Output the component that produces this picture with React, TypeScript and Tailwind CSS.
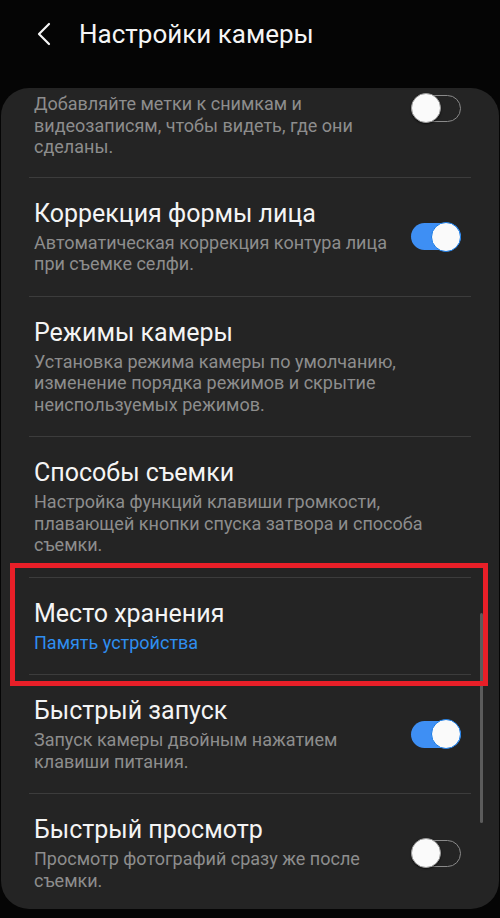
import type { ReactNode } from "react";

type RowProps = {
  title?: string;
  subtitle: string;
  accent?: boolean;
  toggle?: "on" | "off";
};

function Toggle({ on }: { on: boolean }) {
  return (
    <div className="relative ml-[12px] flex h-[30px] w-[50px] shrink-0 items-center">
      <div
        className={
          on
            ? "h-[27px] w-full rounded-full bg-[#3e8ff4]"
            : "h-[27px] w-full rounded-full border-[1.5px] border-[#8a8a8a]"
        }
      />
      <div
        className={
          on
            ? "absolute right-0 top-0 h-[30px] w-[30px] rounded-full border-[1.5px] border-[#1479e6] bg-[#fafafa]"
            : "absolute left-0 top-0 h-[30px] w-[30px] rounded-full border border-[#9a9a9a] bg-[#fafafa] shadow-[0_1px_2px_rgba(0,0,0,0.6)]"
        }
      />
    </div>
  );
}

function Divider() {
  return <div className="mx-[28px] h-px bg-[#3c3c3c]" />;
}

function Subtitle({ text, accent }: { text: string; accent?: boolean }) {
  return (
    <div
      className={
        accent
          ? "text-[18px] leading-[21.5px] text-[#2f8ef0]"
          : "text-[18px] leading-[21.5px] text-[#8d8d8d]"
      }
    >
      {text}
    </div>
  );
}

function Row({ title, subtitle, accent, toggle }: RowProps) {
  return (
    <div
      className={
        toggle
          ? "flex items-center py-[21px] pl-[33px] pr-[38px]"
          : "flex items-center py-[21px] pl-[33px] pr-[30px]"
      }
    >
      <div className="min-w-0 flex-1">
        <div className="mb-[3px] text-[25px] leading-[30px] text-[#f4f4f4]">{title}</div>
        <Subtitle text={subtitle} accent={accent} />
      </div>
      {toggle && <Toggle on={toggle === "on"} />}
    </div>
  );
}

// first row: its title is scrolled away under the card's top edge
function ScrolledRow({ subtitle, toggle }: RowProps) {
  return (
    <div className="flex items-start pb-[19px] pl-[33px] pr-[38px] pt-[5px]">
      <div className="min-w-0 flex-1">
        <Subtitle text={subtitle} />
      </div>
      {toggle && <Toggle on={toggle === "on"} />}
    </div>
  );
}

function Card({ children }: { children: ReactNode }) {
  return (
    <div className="mx-px h-[821px] overflow-hidden rounded-[28px] bg-[#242424]">{children}</div>
  );
}

export default function App() {
  return (
    <div className="relative min-h-[918px] w-[500px] bg-[#050505] font-['Roboto','Noto_Sans',sans-serif]">
      <header className="flex h-[68px] items-center">
        <svg width="16" height="24" viewBox="0 0 16 24" className="ml-[36px]">
          <polyline
            points="13,2 3,12 13,22"
            fill="none"
            stroke="#f5f5f5"
            strokeWidth="2.2"
            strokeLinecap="round"
            strokeLinejoin="round"
          />
        </svg>
        <h1 className="ml-[27px] text-[26px] leading-[30px] text-[#f5f5f5]">Настройки камеры</h1>
      </header>
      <div className="h-[20px]" />

      <Card>
        <ScrolledRow
          subtitle="Добавляйте метки к снимкам и видеозаписям, чтобы видеть, где они сделаны."
          toggle="off"
        />
        <Divider />
        <Row
          title="Коррекция формы лица"
          subtitle="Автоматическая коррекция контура лица при съемке селфи."
          toggle="on"
        />
        <Divider />
        <Row
          title="Режимы камеры"
          subtitle="Установка режима камеры по умолчанию, изменение порядка режимов и скрытие неиспользуемых режимов."
        />
        <Divider />
        <Row
          title="Способы съемки"
          subtitle="Настройка функций клавиши громкости, плавающей кнопки спуска затвора и способа съемки."
        />
        <Divider />
        <Row title="Место хранения" subtitle="Память устройства" accent />
        <Divider />
        <Row
          title="Быстрый запуск"
          subtitle="Запуск камеры двойным нажатием клавиши питания."
          toggle="on"
        />
        <Divider />
        <Row
          title="Быстрый просмотр"
          subtitle="Просмотр фотографий сразу же после съемки."
          toggle="off"
        />
      </Card>

      {/* scrollbar */}
      <div className="absolute left-[480px] top-[613px] h-[210px] w-[3px] rounded-full bg-[#5c5c5c]" />

      {/* highlight annotation */}
      <div className="pointer-events-none absolute left-[10px] top-[563px] h-[123px] w-[478px] border-[5px] border-[#e81f28]" />
    </div>
  );
}
